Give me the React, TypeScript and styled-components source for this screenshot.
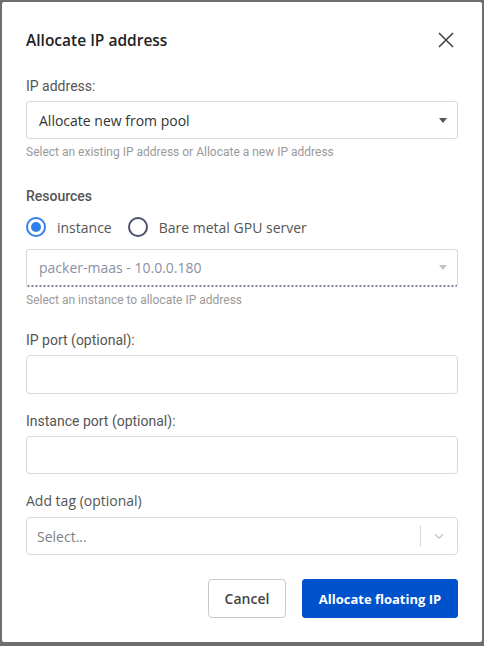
import React from 'react';
import styled, { createGlobalStyle } from 'styled-components';

const GlobalStyle = createGlobalStyle`
    html, body {
        margin: 0;
        padding: 0;
        background: #6e6e6e;
    }

    * {
        box-sizing: border-box;
    }
`;

const Backdrop = styled.div`
    width: 484px;
    height: 646px;
    padding: 2px;
    background: #6e6e6e;
`;

const Modal = styled.div`
    width: 480px;
    height: 640px;
    background: #fff;
    border-radius: 2px;
    padding: 26px 24px 24px;
    display: flex;
    flex-direction: column;
    font-family: "Open Sans", sans-serif;
`;

const Header = styled.div`
    display: flex;
    align-items: center;
    justify-content: space-between;
    height: 24px;
`;

const Title = styled.h2`
    margin: 0;
    font-size: 15.5px;
    font-weight: 600;
    line-height: 24px;
    color: #222;
`;

const CloseButton = styled.button`
    border: none;
    background: none;
    padding: 0;
    width: 20px;
    height: 20px;
    margin-right: 2px;
    display: flex;
    align-items: center;
    justify-content: center;
    cursor: pointer;
`;

const Field = styled.div<{ top: number }>`
    margin-top: ${props => props.top}px;
    display: flex;
    flex-direction: column;
`;

const Label = styled.label<{ sans?: boolean; weight?: number; below?: number }>`
    font-family: ${props => props.sans ? '"Open Sans", sans-serif' : 'Roboto, sans-serif'};
    font-size: 14px;
    font-weight: ${props => props.weight || 400};
    line-height: 20px;
    color: #555;
    margin-bottom: ${props => props.below ?? 5}px;
`;

const SelectBox = styled.div<{ disabled?: boolean }>`
    height: 38px;
    border: 1px solid #d9d9d9;
    border-bottom: ${props => props.disabled ? '2px dotted #7d8299' : '1px solid #d9d9d9'};
    border-radius: 3px;
    display: flex;
    align-items: center;
    padding: 0 10px 0 12px;
    font-size: 14px;
    color: ${props => props.disabled ? '#8a90a6' : '#333'};

    .value {
        flex: 1;
    }
`;

const Caret = styled.span<{ light?: boolean }>`
    width: 0;
    height: 0;
    border-left: 4.5px solid transparent;
    border-right: 4.5px solid transparent;
    border-top: 5px solid ${props => props.light ? '#c4c4c4' : '#555'};
`;

const Helper = styled.div`
    font-family: Roboto, sans-serif;
    font-size: 12px;
    line-height: 16px;
    color: #9a9a9a;
    margin-top: 5px;
`;

const RadioRow = styled.div`
    display: flex;
    align-items: center;
    gap: 16px;
    height: 20px;
    margin-bottom: 12px;
`;

const Radio = styled.label<{ checked?: boolean }>`
    display: flex;
    align-items: center;
    gap: 11px;
    font-size: 14px;
    color: #555;

    .ring {
        width: 20px;
        height: 20px;
        border-radius: 50%;
        border: 2px solid ${props => props.checked ? '#2f80ed' : '#4b506e'};
        display: flex;
        align-items: center;
        justify-content: center;
    }

    .dot {
        width: 10px;
        height: 10px;
        border-radius: 50%;
        background: #2f80ed;
    }
`;

const TextInput = styled.input<{ tall?: boolean }>`
    height: ${props => props.tall ? 39 : 38}px;
    border: 1px solid #d9d9d9;
    border-radius: 4px;
    padding: 0 12px;
    font-family: "Open Sans", sans-serif;
    font-size: 14px;
    outline: none;
`;

const TagSelect = styled.div`
    height: 38px;
    border: 1px solid #d9d9d9;
    border-radius: 4px;
    display: flex;
    align-items: center;
    padding-left: 10px;
    font-size: 14px;
    color: #808080;

    .placeholder {
        flex: 1;
    }

    .sep {
        width: 1px;
        height: 22px;
        background: #d9d9d9;
    }

    .indicator {
        width: 36px;
        display: flex;
        justify-content: center;
    }
`;

const Footer = styled.div`
    margin-top: 24px;
    display: flex;
    justify-content: flex-end;
    gap: 16px;
`;

const Button = styled.button<{ primary?: boolean }>`
    height: 39px;
    padding: 0;
    width: ${props => props.primary ? 156 : 78}px;
    border-radius: ${props => props.primary ? 3 : 4}px;
    border: 1px solid ${props => props.primary ? '#0052cc' : '#c9c9c9'};
    background: ${props => props.primary ? '#0052cc' : '#fff'};
    color: ${props => props.primary ? '#fff' : '#444'};
    font-family: "Open Sans", sans-serif;
    font-size: ${props => props.primary ? 13 : 14}px;
    font-weight: ${props => props.primary ? 700 : 600};
    cursor: pointer;
`;

function App() {
    return <>
        <GlobalStyle />
        <Backdrop>
            <Modal>
                <Header>
                    <Title>Allocate IP address</Title>
                    <CloseButton aria-label='Close'>
                        <svg width='16' height='16' viewBox='0 0 16 16'>
                            <path d='M1 1 L15 15 M15 1 L1 15' stroke='#444' strokeWidth='1.6' />
                        </svg>
                    </CloseButton>
                </Header>

                <Field top={24}>
                    <Label>IP address:</Label>
                    <SelectBox>
                        <span className='value'>Allocate new from pool</span>
                        <Caret />
                    </SelectBox>
                    <Helper>Select an existing IP address or Allocate a new IP address</Helper>
                </Field>

                <Field top={26}>
                    <Label weight={500} below={11}>Resources</Label>
                    <RadioRow>
                        <Radio checked>
                            <span className='ring'><span className='dot' /></span>
                            instance
                        </Radio>
                        <Radio>
                            <span className='ring' />
                            Bare metal GPU server
                        </Radio>
                    </RadioRow>
                    <SelectBox disabled>
                        <span className='value'>packer-maas - 10.0.0.180</span>
                        <Caret light />
                    </SelectBox>
                    <Helper>Select an instance to allocate IP address</Helper>
                </Field>

                <Field top={22}>
                    <Label>IP port (optional):</Label>
                    <TextInput tall />
                </Field>

                <Field top={17}>
                    <Label>Instance port (optional):</Label>
                    <TextInput />
                </Field>

                <Field top={17}>
                    <Label sans below={6}>Add tag (optional)</Label>
                    <TagSelect>
                        <span className='placeholder'>Select...</span>
                        <span className='sep' />
                        <span className='indicator'>
                            <svg width='14' height='14' viewBox='0 0 20 20'>
                                <path d='M4 7.5 L10 13 L16 7.5' fill='none' stroke='#c8c8c8' strokeWidth='2' />
                            </svg>
                        </span>
                    </TagSelect>
                </Field>

                <Footer>
                    <Button>Cancel</Button>
                    <Button primary>Allocate floating IP</Button>
                </Footer>
            </Modal>
        </Backdrop>
    </>
}

export default App;
